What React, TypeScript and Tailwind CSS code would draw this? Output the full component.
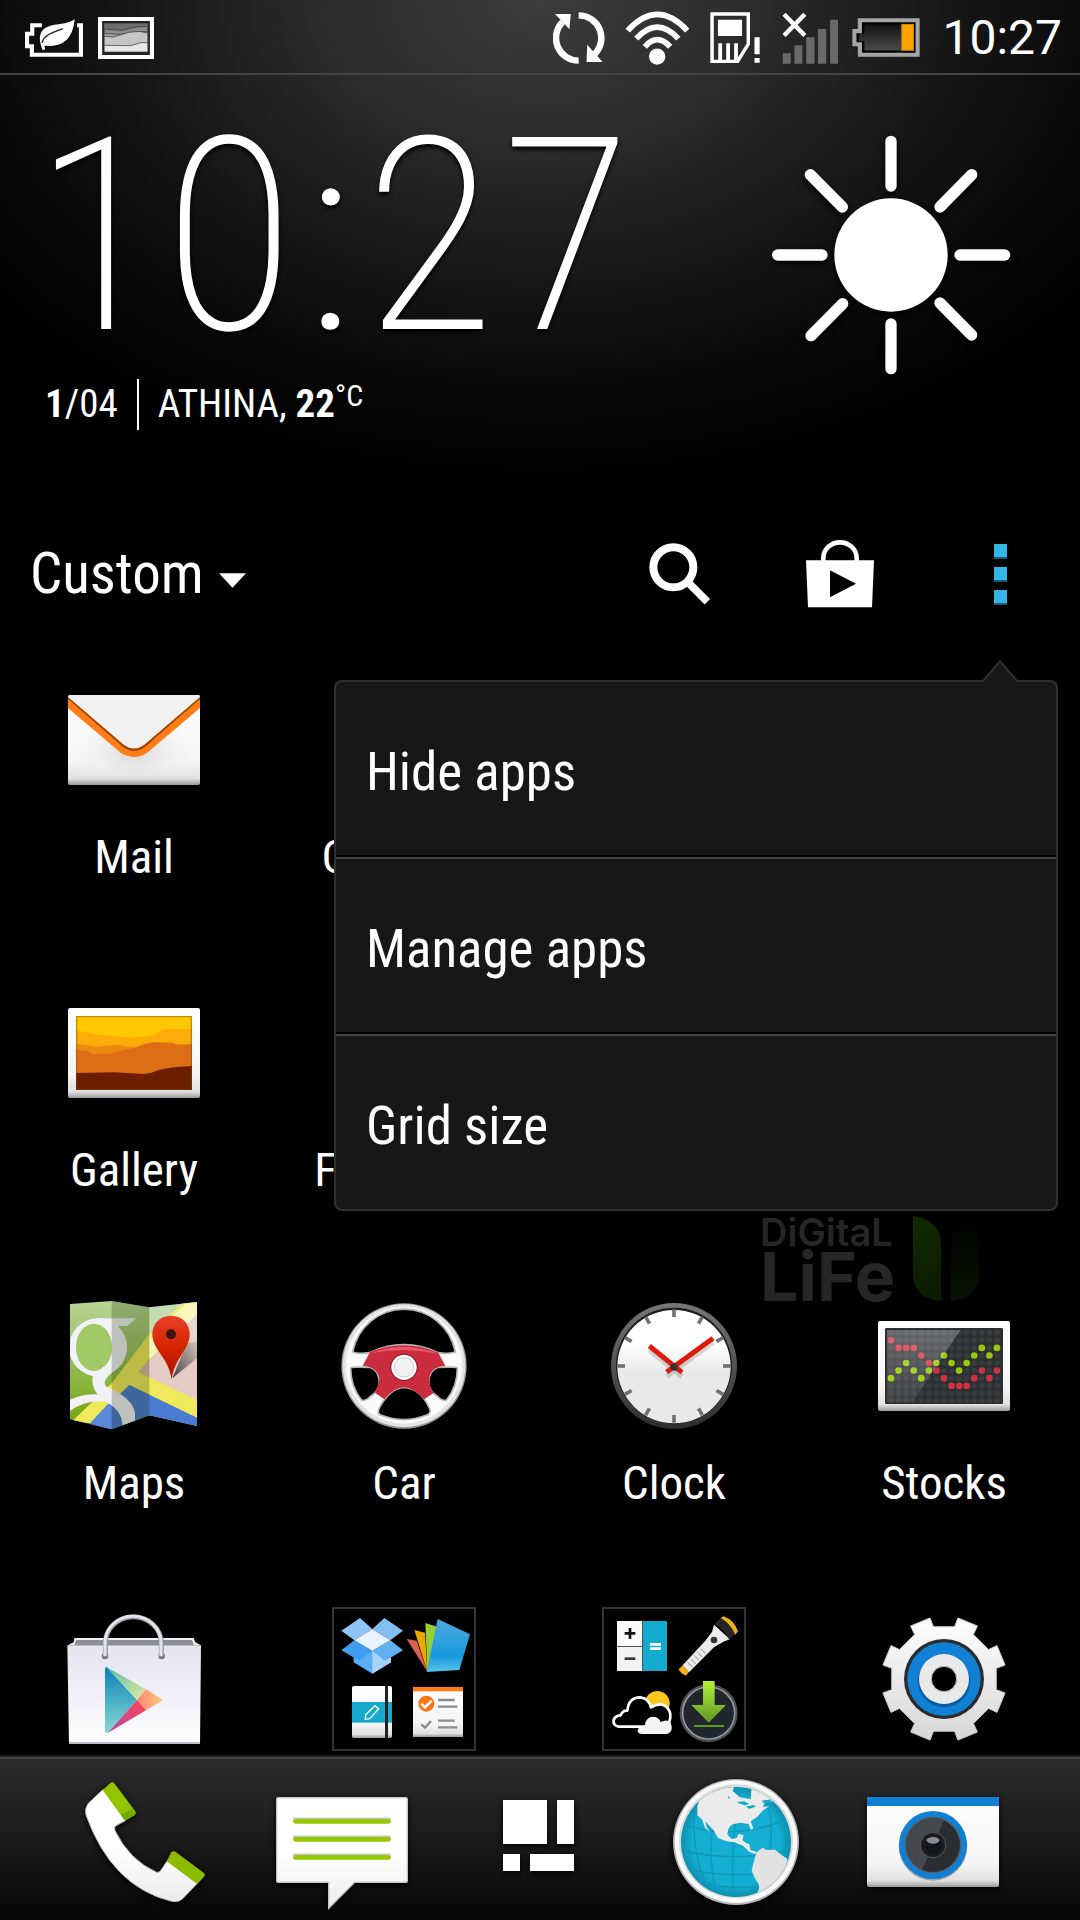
import React from "react";

const condensed = "font-['Roboto_Condensed','Roboto',sans-serif]";

/* ---------- status bar icons ---------- */

function PowerSaverIcon() {
  return (
    <svg className="h-[38px] w-[58px]" viewBox="73 53 168 114" preserveAspectRatio="none" aria-label="Power saver">
      <path d="M122 72H94V97H79V135H93V160H235V72H224" fill="none" stroke="#fff" strokeWidth="12" />
      <path d="M217 54C212 100 195 133 145 134C137 134 132 132 129 135L132 144L124 147C116 125 112 105 122 90C142 62 185 76 217 54Z" fill="#fff" />
      <path d="M122 124C130 100 150 95 182 82" fill="none" stroke="#222" strokeWidth="4" />
    </svg>
  );
}

function PictureIcon() {
  return (
    <svg className="h-[42px] w-[56px]" viewBox="285 54 163 126" preserveAspectRatio="none" aria-label="Picture saved">
      <rect x="291" y="60" width="151" height="114" fill="#222" stroke="#fff" strokeWidth="12" />
      <rect x="303" y="73" width="127" height="86" fill="#6d6d6d" />
      <path d="M303 90L355 94L395 84L430 82V159H303Z" fill="#8b8b8b" stroke="#333" strokeWidth="2" />
      <path d="M303 104L350 106L400 98L430 98V159H303Z" fill="#a5a5a5" stroke="#333" strokeWidth="2" />
      <path d="M303 112L330 114L375 100L405 97L430 102V159H303Z" fill="#c6c6c6" stroke="#333" strokeWidth="2" />
      <path d="M303 139L380 140L410 131L430 131V159H303Z" fill="#e8e8e8" stroke="#333" strokeWidth="2" />
    </svg>
  );
}

function SyncIcon() {
  return (
    <svg className="h-[52px] w-[52px]" viewBox="38 36 152 156" preserveAspectRatio="none" aria-label="Syncing">
      <g fill="none" stroke="#fff" strokeWidth="19">
        <path d="M113 182A66 68 0 0 1 66 66" />
        <path d="M113 46A66 68 0 0 1 160 162" />
      </g>
      <path d="M44 42H90L86 88ZM138 134L183 186H136Z" fill="#fff" />
    </svg>
  );
}

function WifiIcon() {
  return (
    <svg className="h-[54px] w-[65px]" viewBox="248 32 190 160" preserveAspectRatio="none" aria-label="Wi-Fi">
      <g fill="none" stroke="#fff" strokeWidth="17">
        <path d="M256 90Q342 -6 430 90" />
        <path d="M281 114Q342 46 404 114" />
        <path d="M306 138Q342 96 380 138" />
      </g>
      <circle cx="342" cy="167" r="24" fill="#fff" />
    </svg>
  );
}

function SimIcon() {
  return (
    <svg className="h-[51px] w-[50px]" viewBox="491 36 145 153" preserveAspectRatio="none" aria-label="SIM problem">
      <path d="M497 42H602V132L571 184H497Z" fill="none" stroke="#fff" strokeWidth="10" />
      <path d="M514 59H584V108H514ZM515 130H526V184H515ZM538 130H549V184H538ZM561 130H572V176L561 184ZM620 112H635V163H620ZM620 174H635V188H620Z" fill="#fff" />
    </svg>
  );
}

function SignalIcon() {
  return (
    <svg className="h-[52px] w-[56px]" viewBox="702 30 162 155" preserveAspectRatio="none" aria-label="No signal">
      <path d="M704 153H727V184H704ZM738 129H761V184H738ZM772 105H796V184H772ZM806 81H830V184H806ZM841 53H864V184H841Z" fill="#696969" />
      <path d="M708 37L768 100M768 37L708 100" stroke="#fff" strokeWidth="13" />
    </svg>
  );
}

function BatteryIcon() {
  return (
    <svg className="h-[39px] w-[68px]" viewBox="906 55 198 116" preserveAspectRatio="none" aria-label="Battery low">
      <defs>
        <linearGradient id="cell" x1="0" y1="0" x2="0" y2="1">
          <stop offset="0" stopColor="#111" />
          <stop offset="1" stopColor="#4a4a4a" />
        </linearGradient>
      </defs>
      <path d="M929 62H1097V164H929V133H913V94H929Z" fill="#000" stroke="#a5a5a5" strokeWidth="12" />
      <path d="M942 74H1050V152H942V124H926V102H942Z" fill="url(#cell)" />
      <rect x="1051" y="74" width="34" height="77" fill="#ffa200" stroke="#c98a10" strokeWidth="3" />
    </svg>
  );
}

/* ---------- widget and toolbar drawings ---------- */

function SunIcon() {
  return (
    <svg className="size-[240px] drop-shadow-[0_3px_3px_#000]" viewBox="93 75 720 720" role="img" aria-label="Sunny">
      <circle cx="453" cy="435" r="170" fill="#fff" />
      <g stroke="#fff" strokeWidth="34" strokeLinecap="round">
        <path d="M453 94V228M453 642V776M113 435H246M660 435H794M211 194L307 291M695 194L600 291M213 677L308 581M695 675L600 579" />
      </g>
    </svg>
  );
}

function SearchIcon() {
  return (
    <svg className="size-[62px]" viewBox="149 95 186 186" aria-hidden="true">
      <circle cx="222" cy="168" r="60" fill="none" stroke="#fff" strokeWidth="24" />
      <path d="M271 218L324 271" stroke="#fff" strokeWidth="23" />
    </svg>
  );
}

function StoreIcon() {
  return (
    <svg className="size-[68px]" viewBox="621 86 204 204" aria-hidden="true">
      <path d="M621 147H825L819 288H627ZM693 177V258L771 217Z" fill="#fff" fillRule="evenodd" />
      <path d="M673 150V140A50 47 0 0 1 773 140V150" fill="none" stroke="#fff" strokeWidth="14" />
    </svg>
  );
}

/* ---------- app icons ---------- */

const iconBox = "size-36";

function IconDefs() {
  return (
    <svg className="absolute size-0" aria-hidden="true">
      <defs>
        <linearGradient id="paper" x1="0" y1="0" x2="0" y2="1">
          <stop offset="0" stopColor="#fff" />
          <stop offset="0.75" stopColor="#f4f4f4" />
          <stop offset="0.93" stopColor="#e0e0e0" />
          <stop offset="1" stopColor="#9a9a9a" />
        </linearGradient>
        <linearGradient id="metal" x1="0" y1="0" x2="0" y2="1">
          <stop offset="0" stopColor="#fff" />
          <stop offset="1" stopColor="#d6d6d6" />
        </linearGradient>
        <linearGradient id="gloss" x1="0" y1="0" x2="0" y2="1">
          <stop offset="0.5" stopColor="#fff" />
          <stop offset="1" stopColor="#ececec" />
        </linearGradient>
      </defs>
    </svg>
  );
}

function MailIcon() {
  return (
    <svg className={iconBox} viewBox="0 0 144 144" aria-hidden="true">
      <defs>
        <radialGradient id="mailShade" cx="0.5" cy="0.7" r="0.55">
          <stop offset="0" stopColor="#d6d6d6" />
          <stop offset="1" stopColor="#fff" stopOpacity="0" />
        </radialGradient>
      </defs>
      <rect x="6" y="27" width="132" height="90" rx="2" fill="url(#paper)" />
      <rect x="7" y="28" width="130" height="80" fill="url(#mailShade)" />
      <path d="M6 32V39L58 84Q72 94 86 84L138 39V32Z" fill="#fff" />
      <path d="M6 29V40L59 85Q72 93 85 85L138 40V29Z" fill="#ff7c17" />
      <path d="M6 31L61 79Q72 87 83 79L138 31V28H6Z" fill="#a34400" />
      <path d="M6 29L62 77Q72 84 82 77L138 29Q138 27 136 27H8Q6 27 6 29Z" fill="#f1f1f1" />
    </svg>
  );
}

function GalleryIcon() {
  return (
    <svg className={iconBox} viewBox="186 63 432 432" aria-hidden="true">
      <rect x="204" y="144" width="396" height="270" rx="6" fill="url(#paper)" />
      <rect x="228" y="168" width="348" height="222" fill="#ffc800" />
      <path d="M228 212L300 225L350 228L385 233L455 228L490 208L576 207V390H228Z" fill="#fdac0a" />
      <path d="M228 252L290 260L350 254L405 262L460 250V390H228Z" fill="#ec8a10" />
      <path d="M228 269L262 272L276 282L330 281L375 269L410 262Q430 250 460 247L515 248Q530 257 576 252V390H228Z" fill="#dd6e16" />
      <path d="M228 339L345 337L430 342Q455 341 475 330L520 322L576 318V390H228Z" fill="#6b1e00" />
      <rect x="230" y="170" width="344" height="218" fill="none" stroke="#7a4a00" strokeOpacity="0.45" strokeWidth="4" />
    </svg>
  );
}

function MapsIcon() {
  return (
    <svg className={iconBox} viewBox="66 72 432 432" aria-hidden="true">
      <defs>
        <clipPath id="sheet">
          <path d="M90 102L215 93L328 112L471 96V468L328 436L215 478L90 448Z" />
        </clipPath>
        <linearGradient id="field" x1="0" y1="0" x2="0" y2="1">
          <stop offset="0" stopColor="#b9d496" />
          <stop offset="1" stopColor="#6fa30c" />
        </linearGradient>
        <linearGradient id="pin" x1="0" y1="0" x2="0" y2="1">
          <stop offset="0" stopColor="#e8402a" />
          <stop offset="0.5" stopColor="#d62400" />
          <stop offset="1" stopColor="#a80f00" />
        </linearGradient>
        <linearGradient id="pinShade" x1="1" y1="0" x2="0" y2="1">
          <stop offset="0" stopColor="#444" stopOpacity="0.1" />
          <stop offset="1" stopColor="#222" stopOpacity="0.85" />
        </linearGradient>
      </defs>
      <g clipPath="url(#sheet)">
        <rect x="90" y="90" width="240" height="390" fill="url(#field)" />
        <rect x="328" y="90" width="145" height="390" fill="#b5d6a0" />
        <path d="M471 120L296 305L471 395Z" fill="#e3cdc4" />
        <path d="M328 192L471 60V130L328 268L296 305L328 322L471 390V445L268 345L155 460L95 455L215 340Z" fill="#f1e95c" />
        <path d="M328 205L440 100H475V130L328 268Z" fill="#f7f6b0" />
        <path d="M328 270L296 305L328 322Z" fill="#d8b9a8" />
        <path d="M268 345L471 443V480H130Z" fill="#4a7ad2" />
        <path d="M215 390L150 460L215 480Z" fill="#5b89da" />
        <ellipse cx="174" cy="232" rx="87" ry="87" fill="#f2f1f6" />
        <path d="M165 145H289L262 168H205Z" fill="#f2f1f6" />
        <ellipse cx="162" cy="232" rx="54" ry="71" fill="#a0c865" />
        <path d="M225 300Q180 335 200 350Q280 385 285 430V480H248Q250 425 205 400Q150 365 158 320L190 290Z" fill="#f2f1f6" />
        <path d="M88 390Q150 362 215 380V396Q135 385 88 425Z" fill="#f2f1f6" />
        <path d="M215 90L328 110V440L215 480Z" fill="#1b2a00" fillOpacity="0.24" />
        <path d="M328 240L471 210V90H328Z" fill="#fff" fillOpacity="0.18" />
      </g>
      <path d="M397 325L471 265V215L440 220Z" fill="url(#pinShade)" />
      <path d="M393 137C428 137 449 163 449 192C449 240 405 260 395 328C385 260 337 240 337 192C337 163 358 137 393 137Z" fill="url(#pin)" />
      <circle cx="393" cy="193" r="15" fill="#3b1414" />
    </svg>
  );
}

function CarIcon() {
  return (
    <svg className={iconBox} viewBox="876 72 432 432" aria-hidden="true">
      <circle cx="1092" cy="288" r="188" fill="#9d9d9d" />
      <circle cx="1092" cy="287" r="184" fill="#e4e4e4" />
      <circle cx="1092" cy="286" r="174" fill="#fbfbfb" />
      <g fill="#000" stroke="#b5b5b5" strokeWidth="5">
        <path d="M938 246A157 160 0 0 1 1246 246Q1222 253 1195 248Q1092 200 988 248Q955 253 938 246Z" />
        <path d="M932 294Q930 290 990 292Q1018 300 1018 340Q1015 365 990 380Q980 392 965 391Q932 350 932 294Z" />
        <path d="M1252 294Q1254 290 1194 292Q1166 300 1166 340Q1169 365 1194 380Q1204 392 1219 391Q1252 350 1252 294Z" />
        <path d="M1020 410Q1050 355 1092 352Q1140 355 1166 410Q1178 430 1158 436Q1092 462 1024 436Q1008 432 1020 410Z" />
      </g>
      <path d="M990 246Q1092 205 1195 248L1216 288Q1168 290 1168 330Q1168 355 1182 368L1152 388Q1120 352 1092 352Q1062 352 1033 388L1002 366Q1018 350 1018 325Q1012 290 968 288Z" fill="#cb2c3d" />
      <path d="M992 250Q1092 212 1193 251Q1092 230 992 250Z" fill="#e75a6c" />
      <circle cx="1092" cy="292" r="41" fill="#8c1020" />
      <circle cx="1092" cy="292" r="38" fill="#fff" />
      <circle cx="1092" cy="292" r="29" fill="#f2f2f2" stroke="#cfcfcf" strokeWidth="3" />
    </svg>
  );
}

const hours = [0, 30, 60, 90, 120, 150, 180, 210, 240, 270, 300, 330];

function ClockIcon() {
  return (
    <svg className={iconBox} viewBox="66 312 432 432" aria-hidden="true">
      <defs>
        <linearGradient id="rim" x1="0" y1="0" x2="0" y2="1">
          <stop offset="0" stopColor="#777" />
          <stop offset="1" stopColor="#2d2d2d" />
        </linearGradient>
        <linearGradient id="dial" x1="0" y1="0" x2="0" y2="1">
          <stop offset="0.3" stopColor="#fff" />
          <stop offset="0.55" stopColor="#e9e9e9" />
        </linearGradient>
      </defs>
      <circle cx="282" cy="528" r="189" fill="url(#rim)" />
      <circle cx="282" cy="527" r="174" fill="#1c1c1c" />
      <circle cx="282" cy="530" r="170" fill="url(#dial)" />
      <g stroke="#707070" strokeWidth="11">
        {hours.map((a) => (
          <path key={a} d="M282 358V381" transform={`rotate(${a} 282 528)`} />
        ))}
      </g>
      <path d="M208 480L306 559M400 456L260 558" stroke="#000" strokeOpacity="0.15" strokeWidth="16" />
      <path d="M208 468L306 547M399 445L260 546" stroke="#dd1a0c" strokeWidth="15" />
      <circle cx="282" cy="531" r="11" fill="#333" />
    </svg>
  );
}

const redRows = [0, 1, 1, 1, 2, 3, 4, 5, 6, 6, 6, 5, 4, 5, 4];
const greenRows = [5, 4, 3, 4, 5, 4, 3, 2, 3, 4, 3, 2, 1, 2, 1];

function StocksIcon() {
  return (
    <svg className={iconBox} viewBox="876 312 432 432" aria-hidden="true">
      <defs>
        <pattern id="grid" x="921.6" y="416.9" width="22.7" height="22.7" patternUnits="userSpaceOnUse">
          <circle cx="11.4" cy="11.4" r="8" fill="#fff" fillOpacity="0.06" />
        </pattern>
        <linearGradient id="glare" x1="0" y1="0" x2="0" y2="1">
          <stop offset="0" stopColor="#fff" stopOpacity="0.27" />
          <stop offset="1" stopColor="#fff" stopOpacity="0.08" />
        </linearGradient>
      </defs>
      <rect x="894" y="393" width="396" height="270" rx="6" fill="url(#paper)" />
      <rect x="915" y="414" width="354" height="228" rx="4" fill="#2d3033" />
      <rect x="921" y="416" width="342" height="222" fill="url(#grid)" />
      {redRows.map((row, i) => (
        <circle key={i} cx={933 + i * 22.7} cy={451 + row * 22.7} r="10" fill="#d03040" />
      ))}
      {greenRows.map((row, i) => (
        <circle key={i} cx={933 + i * 22.7} cy={451 + row * 22.7} r="10" fill="#96c805" />
      ))}
      <path d="M921 420H1141L998 636H921Z" fill="url(#glare)" />
    </svg>
  );
}

function PlayStoreIcon() {
  return (
    <svg className={iconBox} viewBox="66 51 432 432" aria-hidden="true">
      <defs>
        <linearGradient id="bag" x1="0" y1="0" x2="0" y2="1">
          <stop offset="0" stopColor="#e6e4f0" />
          <stop offset="0.6" stopColor="#f3f2f8" />
          <stop offset="1" stopColor="#fff" />
        </linearGradient>
        <linearGradient id="blue" x1="0" y1="0" x2="0" y2="1">
          <stop offset="0" stopColor="#0d7fb8" />
          <stop offset="1" stopColor="#86dcd3" />
        </linearGradient>
        <linearGradient id="pink" x1="1" y1="0" x2="0" y2="1">
          <stop offset="0" stopColor="#fb4552" />
          <stop offset="1" stopColor="#b54bab" />
        </linearGradient>
        <linearGradient id="lime" x1="0" y1="0" x2="1" y2="1">
          <stop offset="0" stopColor="#56bfa6" />
          <stop offset="1" stopColor="#e6e9a6" />
        </linearGradient>
        <linearGradient id="peach" x1="0" y1="0" x2="1" y2="0">
          <stop offset="0" stopColor="#fb8375" />
          <stop offset="1" stopColor="#ffcf74" />
        </linearGradient>
      </defs>
      <path d="M103 144H461L466 157L483 166H83L101 157Z" fill="#efeff4" />
      <path d="M108 150H456L462 165H103Z" fill="#8e8e96" />
      <path d="M82 166H483L480 462H87Z" fill="url(#bag)" />
      <path d="M87 459H480" stroke="#b9b9cc" strokeWidth="6" />
      <circle cx="195" cy="198" r="10" fill="#77777f" />
      <circle cx="365" cy="198" r="10" fill="#77777f" />
      <path d="M196 200V160A84 80 0 0 1 364 160V200" fill="none" stroke="#9999a3" strokeWidth="15" />
      <path d="M195 198V160A84 80 0 0 1 363 158V198" fill="none" stroke="#e4e4ec" strokeWidth="9" />
      <path d="M199 230Q195 232 195 238V424Q197 430 202 430L291 330Z" fill="url(#blue)" />
      <path d="M200 231L318 298L291 330Z" fill="url(#lime)" />
      <path d="M318 298L370 330L318 361L291 330Z" fill="url(#peach)" />
      <path d="M291 330L318 361L202 430Z" fill="url(#pink)" />
    </svg>
  );
}

function OfficeFolderIcon() {
  return (
    <svg className={iconBox} viewBox="876 51 432 432" aria-hidden="true">
      <defs>
        <linearGradient id="card" x1="0" y1="0" x2="0" y2="1">
          <stop offset="0" stopColor="#4fa9df" />
          <stop offset="0.7" stopColor="#169ade" />
          <stop offset="1" stopColor="#5cc4ea" />
        </linearGradient>
      </defs>
      <rect x="879" y="54" width="426" height="426" fill="#000" stroke="#333" strokeWidth="6" />
      {/* open box */}
      <path d="M941 180H1053V217L997 251L941 217Z" fill="#5aaef3" />
      <path d="M997 182V251L1053 217V200L1032 210Z" fill="#a6d3f8" />
      <path d="M904 122L960 84L997 117L943 151Z" fill="#8ec5f4" />
      <path d="M1089 122L1033 84L997 117L1051 151Z" fill="#83bdf2" />
      <path d="M904 181L943 151L997 182L958 212Z" fill="#3f9df0" />
      <path d="M1089 181L1051 151L997 182L1036 212Z" fill="#62b1f3" />
      <path d="M943 151L997 117L1051 151L997 182Z" fill="#e8f3fd" />
      {/* fanned sheets */}
      <path d="M1100 147L1130 152L1162 245Z" fill="#d8604e" />
      <path d="M1123 120L1155 128L1162 245Z" fill="#e6a900" />
      <path d="M1156 99L1192 110L1162 245Z" fill="#96cf35" />
      <path d="M1193 87L1290 133L1258 240L1160 246Z" fill="url(#card)" />
      {/* notebook */}
      <rect x="936" y="288" width="120" height="156" rx="5" fill="url(#paper)" />
      <rect x="936" y="336" width="120" height="62" fill="#15a9cd" />
      <rect x="1035" y="288" width="9" height="156" fill="#222" />
      <path d="M977 374L1005 347L1016 357L989 386L976 388Z" fill="none" stroke="#fff" strokeWidth="4" />
      {/* task list */}
      <rect x="1119" y="291" width="150" height="150" fill="url(#paper)" />
      <rect x="1119" y="291" width="150" height="13" fill="#ff7c17" />
      <circle cx="1159" cy="341" r="24" fill="#fb7814" />
      <path d="M1144 341L1155 352L1175 332" fill="none" stroke="#fff" strokeWidth="8" />
      <path d="M1144 403L1155 413L1173 393" fill="none" stroke="#888" strokeWidth="7" />
      <path d="M1194 330H1244M1194 350H1252M1194 392H1244M1194 412H1252" stroke="#8c8c8c" strokeWidth="7" />
    </svg>
  );
}

function ToolsFolderIcon() {
  return (
    <svg className={iconBox} viewBox="66 51 432 432" aria-hidden="true">
      <defs>
        <linearGradient id="arrow" x1="0" y1="0" x2="0" y2="1">
          <stop offset="0" stopColor="#b6f23c" />
          <stop offset="1" stopColor="#5f9420" />
        </linearGradient>
      </defs>
      <rect x="69" y="54" width="426" height="426" fill="#000" stroke="#333" strokeWidth="6" />
      {/* calculator */}
      <rect x="111" y="93" width="76" height="76" fill="#fafafa" />
      <rect x="111" y="171" width="76" height="72" fill="#f2f2f2" />
      <rect x="189" y="93" width="72" height="150" fill="#14abd0" />
      <path d="M134 130H166M150 114V147" stroke="#111" strokeWidth="8" />
      <path d="M134 206H166" stroke="#333" strokeWidth="8" />
      <path d="M210 163H243M210 176H243" stroke="#fff" strokeWidth="8" />
      {/* flashlight */}
      <path d="M308 226L376 152L396 126L402 104L450 148L430 155L402 172L327 247Z" fill="#ececec" />
      <path d="M322 216L337 231M332 206L347 221M342 196L357 211M352 186L367 201M362 176L377 191" stroke="#b5b5b5" strokeWidth="4" />
      <path d="M296 238L308 226L327 245L318 257Q302 252 296 238Z" fill="#eeb01e" />
      <path d="M404 102L422 84Q450 96 466 132L448 150Q432 116 404 102Z" fill="#252525" />
      <path d="M422 84L431 79Q462 90 474 124L466 134Q450 98 422 84Z" fill="#eeb01e" />
      <circle cx="402" cy="150" r="10" fill="#333" />
      {/* weather */}
      <circle cx="232" cy="340" r="37" fill="#fcc81e" />
      <path d="M116 410Q98 406 101 390Q106 376 122 376Q128 360 142 362Q146 322 180 322Q206 324 213 352Q246 332 264 356Q276 372 268 395V410Z" fill="#000" stroke="#fff" strokeWidth="8" strokeLinejoin="round" />
      <path d="M184 432Q172 430 173 420Q178 408 194 407Q198 380 220 380Q238 382 242 396Q262 386 272 398Q282 424 262 432Z" fill="#f4f4f4" />
      {/* download */}
      <circle cx="386" cy="369" r="87" fill="#4d5458" />
      <circle cx="386" cy="369" r="78" fill="#20262b" stroke="#8f979b" strokeWidth="5" />
      <path d="M369 273H404V345H438L386 398L334 345H369Z" fill="url(#arrow)" />
      <path d="M342 408H432" stroke="#5f9a1c" strokeWidth="6" />
    </svg>
  );
}

function gearOutline(cx: number, cy: number) {
  const points: string[] = [];
  const corners: [number, number][] = [[-11, 160], [-9.7, 188], [9.7, 188], [11, 160]];
  for (let i = 0; i < 8; i++) {
    for (const [turn, radius] of corners) {
      const a = ((22.5 + 45 * i + turn) * Math.PI) / 180;
      points.push(`${(cx + radius * Math.cos(a)).toFixed(1)},${(cy + radius * Math.sin(a)).toFixed(1)}`);
    }
  }
  return points.join(" ");
}

function SettingsIcon() {
  return (
    <svg className={iconBox} viewBox="876 51 432 432" aria-hidden="true">
      <polygon points={gearOutline(1092, 267)} fill="url(#metal)" stroke="#c9c9c9" strokeWidth="3" />
      <circle cx="1092" cy="267" r="120" fill="#2b2b2b" />
      <circle cx="1092" cy="267" r="110" fill="#0f80d3" />
      <circle cx="1092" cy="273" r="79" fill="#0a5ea6" />
      <circle cx="1092" cy="267" r="75" fill="#e9e9e9" />
      <circle cx="1092" cy="267" r="38" fill="#000" stroke="#c4c4c4" strokeWidth="3" />
    </svg>
  );
}

/* ---------- dock icons ---------- */

const dockBox = "h-36 w-[145px] drop-shadow-[0_2px_3px_#000]";

function PhoneIcon() {
  return (
    <svg className={dockBox} viewBox="96 540 435 432" aria-hidden="true">
      <path d="M190 598L256 692L226 708Q222 714 225 722Q268 810 350 847Q358 848 362 842L382 812L472 880L428 926Q415 938 395 934Q215 890 138 675Q133 655 145 640Z" fill="url(#gloss)" stroke="#bdbdbd" strokeWidth="3" />
      <path d="M188 600L212 578Q218 575 224 581L286 664Q289 671 283 676L255 692Z" fill="#93c400" />
      <path d="M243 675L277 655L286 667Q289 671 283 676L255 692Z" fill="#74ab00" />
      <path d="M380 814L394 787Q399 781 406 785L491 848Q497 854 492 860L472 882Z" fill="#8cbc00" />
    </svg>
  );
}

function MessagesIcon() {
  return (
    <svg className={dockBox} viewBox="687 540 435 432" aria-hidden="true">
      <path d="M714 623H1098Q1102 623 1102 628V872Q1102 877 1098 877H944L866 955V877H714Q710 877 710 872V628Q710 623 714 623Z" fill="url(#gloss)" stroke="#c4c4c4" strokeWidth="4" />
      <path d="M759 685H1052M759 739H1052M759 793H1052" stroke="#c6c6d0" strokeWidth="5" />
      <path d="M766 694H1046M766 748H1046M766 802H1046" stroke="#96c800" strokeWidth="14" strokeLinecap="round" />
    </svg>
  );
}

function AllAppsIcon() {
  return (
    <svg className={dockBox} viewBox="0 0 145 144" aria-hidden="true">
      <path d="M37 30H81V74H37ZM91 30H108V74H91ZM37 84H54V101H37ZM64 84H108V101H64Z" fill="#fff" />
    </svg>
  );
}

function InternetIcon() {
  return (
    <svg className={dockBox} viewBox="249 540 435 432" aria-hidden="true">
      <defs>
        <clipPath id="globe">
          <circle cx="468" cy="756" r="165" />
        </clipPath>
        <radialGradient id="sea">
          <stop offset="0.8" stopColor="#14aed2" />
          <stop offset="1" stopColor="#0c8fae" />
        </radialGradient>
      </defs>
      <circle cx="468" cy="756" r="189" fill="#b4b4b4" />
      <circle cx="468" cy="755" r="184" fill="#fafafa" />
      <circle cx="468" cy="754" r="171" fill="#dadada" />
      <circle cx="468" cy="756" r="165" fill="url(#sea)" />
      <g clipPath="url(#globe)">
        <g fill="none" stroke="#0f97b8" strokeWidth="4">
          <path d="M300 700Q460 760 640 680M300 780Q460 820 640 780M310 835Q460 870 630 840M340 880Q460 900 600 885" />
          <path d="M345 640Q330 780 385 900M425 620Q370 760 410 910M480 600Q450 760 460 920M560 640Q600 740 530 910M590 640Q640 720 600 850" />
        </g>
        <path d="M358 632Q395 596 462 590L458 603L480 622L512 628L515 590L590 610L577 634L553 640L549 652L568 648L548 662L532 680L512 694L521 716L512 719L506 702L482 698L458 703Q440 715 443 735L455 747L470 744L476 732L491 735L487 751L497 758L508 763L511 780L530 786L525 792L508 786L490 768L464 757L440 754L414 744L402 722L376 694L380 712L391 727L375 714L366 688L352 676L352 650Z" fill="#ebebeb" />
        <path d="M470 636L492 634L508 642L495 646L480 641ZM497 650L520 645L528 650L508 656ZM443 618L450 622L447 628ZM545 632L575 628L570 638L552 640Z" fill="#14a9cc" />
        <path d="M530 786L548 773L560 780L585 779L606 796L622 806Q620 838 600 865Q575 902 530 912Q544 890 532 876Q522 862 515 842L520 820Z" fill="#e2e2e2" />
      </g>
    </svg>
  );
}

function CameraIcon() {
  return (
    <svg className={dockBox} viewBox="840 540 435 432" aria-hidden="true">
      <rect x="861" y="621" width="396" height="270" rx="6" fill="url(#paper)" />
      <path d="M861 648V627Q861 621 867 621H1251Q1257 621 1257 627V648Z" fill="#0f80d3" />
      <circle cx="1059" cy="769" r="103" fill="#777" fillOpacity="0.6" />
      <circle cx="1059" cy="765" r="102" fill="#0f80d3" />
      <circle cx="1059" cy="765" r="85" fill="#596068" />
      <circle cx="1059" cy="765" r="81" fill="#2a2d31" />
      <path d="M1092 691A81 81 0 0 0 1026 839Z" fill="#45484c" />
      <circle cx="1059" cy="765" r="38" fill="#1c1c1e" stroke="#55585b" strokeWidth="3" />
      <circle cx="1059" cy="765" r="25" fill="#14151c" />
      <ellipse cx="1059" cy="751" rx="19" ry="10" fill="#8b8b93" />
    </svg>
  );
}

/* ---------- page ---------- */

type AppEntry = { name: string; icon?: React.ReactNode; hideLabel?: boolean };

const apps: (AppEntry | null)[] = [
  { name: "Mail", icon: <MailIcon /> },
  { name: "Calendar" },
  null,
  null,
  { name: "Gallery", icon: <GalleryIcon /> },
  { name: "Facebook" },
  null,
  null,
  { name: "Maps", icon: <MapsIcon /> },
  { name: "Car", icon: <CarIcon /> },
  { name: "Clock", icon: <ClockIcon /> },
  { name: "Stocks", icon: <StocksIcon /> },
  { name: "Play Store", icon: <PlayStoreIcon />, hideLabel: true },
  { name: "Office", icon: <OfficeFolderIcon />, hideLabel: true },
  { name: "Tools", icon: <ToolsFolderIcon />, hideLabel: true },
  { name: "Settings", icon: <SettingsIcon />, hideLabel: true },
];

const dock: AppEntry[] = [
  { name: "Phone", icon: <PhoneIcon /> },
  { name: "Messages", icon: <MessagesIcon /> },
  { name: "All apps", icon: <AllAppsIcon /> },
  { name: "Internet", icon: <InternetIcon /> },
  { name: "Camera", icon: <CameraIcon /> },
];

function AppTile({ app }: { app: AppEntry }) {
  return (
    <button type="button" aria-label={app.name} className="flex flex-col items-center gap-[17px]">
      {app.icon ?? <span className="size-36" />}
      {!app.hideLabel && <span className="text-[47px] leading-14">{app.name}</span>}
    </button>
  );
}

function StatusBar() {
  return (
    <div className="flex h-[75px] items-center justify-between border-b-2 border-[#444] pt-[2px] pr-[18px] pl-[25px]">
      <div className="flex items-center gap-[15px]">
        <PowerSaverIcon />
        <PictureIcon />
      </div>
      <div className="flex items-center">
        <div className="flex items-center gap-5">
          <SyncIcon />
          <WifiIcon />
          <SimIcon />
        </div>
        <div className="ml-[22px] flex items-center gap-[14px]">
          <SignalIcon />
          <BatteryIcon />
        </div>
        <span className="ml-[22px] font-['Roboto',sans-serif] text-5xl leading-14">10:27</span>
      </div>
    </div>
  );
}

function ClockWidget() {
  return (
    <section className="flex justify-between pt-[27px] pr-[69px] pl-[45px]">
      <div>
        <div className="-ml-3 flex text-[270px] leading-[270px] font-[250] [text-shadow:0_3px_4px_#000]">
          <span>10</span>
          <span className="mx-[10px]">:</span>
          <span>2</span>
          <span className="ml-[6px]">7</span>
        </div>
        <div className="mt-[7px] flex h-[51px] items-center text-[39px] leading-[51px]">
          <span>
            <b>1</b>/04
          </span>
          <span className="mx-[19px] h-full w-[2px] bg-white" />
          <span>
            ATHINA, <b>22</b>
          </span>
          <span className="self-start text-[30px] leading-[34px]">°C</span>
        </div>
      </div>
      <div className="pt-[33px]">
        <SunIcon />
      </div>
    </section>
  );
}

const menuItems = ["Hide apps", "Manage apps", "Grid size"];

function OptionsMenu() {
  return (
    <div role="menu" className="absolute top-[176px] right-[22px] z-10 w-[724px] rounded-lg border-2 border-[#303030] bg-[#171717]">
      <svg className="absolute -top-[22px] right-[39px] h-[22px] w-[34px]" viewBox="0 0 34 22" aria-hidden="true">
        <path d="M0 22L17 2L34 22Z" fill="#171717" />
        <path d="M0 21L17 1L34 21" fill="none" stroke="#303030" strokeWidth="2" />
      </svg>
      {menuItems.map((item, i) => (
        <div key={item}>
          {i > 0 && <div className="h-1 border-t-2 border-b-2 border-t-black border-b-[#444]" />}
          <button type="button" role="menuitem" className="block h-[173px] w-full px-[30px] pt-[6px] text-left text-[53px] leading-[64px]">
            {item}
          </button>
        </div>
      ))}
    </div>
  );
}

function Watermark() {
  return (
    <div className="pointer-events-none absolute top-[572px] left-[760px] flex gap-[13px] text-[#262626]" aria-hidden="true">
      <div className="w-[140px] font-['Inter',sans-serif] whitespace-nowrap">
        <div className="text-[38px] leading-[32px] font-semibold">DiGitaL</div>
        <div className="text-[68px] leading-[56px] font-bold">LiFe</div>
      </div>
      <svg className="h-[85px] w-[66px]" viewBox="0 0 66 85">
        <defs>
          <linearGradient id="leaf" x1="0" y1="0" x2="0.3" y2="1">
            <stop offset="0" stopColor="#112a00" />
            <stop offset="1" stopColor="#0c1c00" />
          </linearGradient>
          <linearGradient id="leafFade" x1="0" y1="0" x2="0" y2="1">
            <stop offset="0" stopColor="#000" />
            <stop offset="1" stopColor="#081300" />
          </linearGradient>
        </defs>
        <path d="M0 0Q28 4 28 28V85Q0 82 0 58Z" fill="url(#leaf)" />
        <path d="M66 0Q38 4 38 28V85Q66 82 66 58Z" fill="url(#leafFade)" />
      </svg>
    </div>
  );
}

export default function App() {
  return (
    <div className={`flex min-h-screen flex-col bg-black text-white ${condensed}`}>
      <IconDefs />
      <header className="bg-[radial-gradient(ellipse_66%_100%_at_50%_0,#3c3c3c_0%,#2b2b2b_30%,#161616_58%,#070707_82%,#000_100%)] pb-[60px]">
        <StatusBar />
        <ClockWidget />
      </header>

      <main className="relative mt-[14px]">
        <div className="flex h-[140px] items-center justify-between pl-[30px]">
          <button type="button" aria-haspopup="listbox" className="flex items-center gap-[15px] text-[57px] leading-[70px]">
            Custom
            <svg className="mt-3 h-[15px] w-[27px]" viewBox="0 0 28 15" aria-hidden="true">
              <path d="M0 0H28L14 15Z" fill="#fff" />
            </svg>
          </button>
          <div className="flex">
            <button type="button" aria-label="Search" className="flex h-[140px] w-40 items-center justify-center">
              <SearchIcon />
            </button>
            <button type="button" aria-label="Play Store" className="flex h-[140px] w-40 items-center justify-center">
              <StoreIcon />
            </button>
            <button type="button" aria-label="More options" className="flex h-[140px] w-40 flex-col items-center justify-center gap-2">
              <span className="h-[15px] w-[13px] border-b-2 border-[#1a5a75] bg-[#33b5e5]" />
              <span className="h-[15px] w-[13px] border-b-2 border-[#1a5a75] bg-[#33b5e5]" />
              <span className="h-[15px] w-[13px] border-b-2 border-[#1a5a75] bg-[#33b5e5]" />
            </button>
          </div>
        </div>
        <OptionsMenu />

        <div className="relative">
          <Watermark />
          <div className="mr-px -ml-px grid grid-cols-4 gap-y-24 pt-6 pb-1">
            {apps.map((app, i) => (app ? <AppTile key={app.name} app={app} /> : <span key={i} />))}
          </div>
        </div>
      </main>

      <nav className="mt-auto border-t-2 border-[#1f1f1f]">
        <div className="grid grid-cols-5 justify-items-center border-t-2 border-[#444] bg-[linear-gradient(#2b2b2b,#1d1d1d_45%,#060606)] pt-[11px] pr-[49px] pb-[6px] pl-[46px]">
          {dock.map((app) => (
            <button type="button" key={app.name} aria-label={app.name}>
              {app.icon}
            </button>
          ))}
        </div>
      </nav>
    </div>
  );
}
